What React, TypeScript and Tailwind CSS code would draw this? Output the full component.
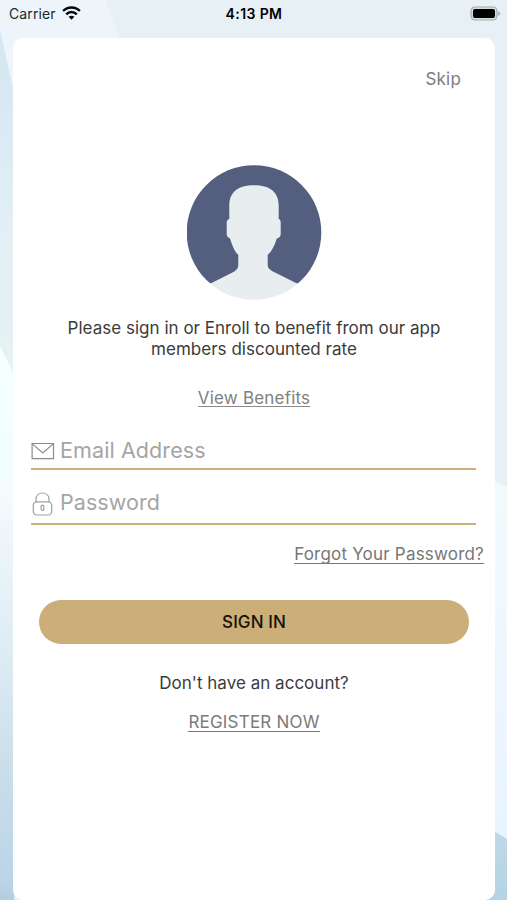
import React from "react";

function Backdrop() {
  return (
    <svg className="absolute inset-0 h-full w-full" viewBox="0 0 507 900" preserveAspectRatio="none" aria-hidden="true">
      <defs>
        <linearGradient id="leftTop" x1="0" y1="30" x2="0" y2="370" gradientUnits="userSpaceOnUse">
          <stop offset="0" stopColor="#d5e6f0" />
          <stop offset="0.3" stopColor="#dbeaf4" />
          <stop offset="0.65" stopColor="#e4f0f5" />
          <stop offset="1" stopColor="#e6f1f3" />
        </linearGradient>
        <linearGradient id="leftLow" x1="0" y1="345" x2="0" y2="900" gradientUnits="userSpaceOnUse">
          <stop offset="0" stopColor="#f5fffe" />
          <stop offset="0.25" stopColor="#f4fdfe" />
          <stop offset="0.35" stopColor="#edf5f9" />
          <stop offset="0.55" stopColor="#dfecf4" />
          <stop offset="0.75" stopColor="#cbdfea" />
          <stop offset="0.97" stopColor="#bbd4e8" />
          <stop offset="1" stopColor="#b0d0dd" />
        </linearGradient>
        <linearGradient id="rightLow" x1="0" y1="480" x2="0" y2="840" gradientUnits="userSpaceOnUse">
          <stop offset="0" stopColor="#f2fafd" />
          <stop offset="1" stopColor="#eaf4ff" />
        </linearGradient>
        <linearGradient id="rightEnd" x1="0" y1="830" x2="0" y2="900" gradientUnits="userSpaceOnUse">
          <stop offset="0" stopColor="#bfd9e7" />
          <stop offset="1" stopColor="#b5d3e3" />
        </linearGradient>
      </defs>
      <rect width="507" height="900" fill="#e7f0f5" />
      <path d="M0 0H105L120 38V100H0Z" fill="#edf5fa" />
      <path d="M0 30L14 92V372L0 345Z" fill="url(#leftTop)" />
      <path d="M0 346L14 374V900H0Z" fill="url(#leftLow)" />
      <path d="M494 481L507 487V840H494Z" fill="url(#rightLow)" />
      <path d="M480 825L494 831L507 839V900H480Z" fill="url(#rightEnd)" />
    </svg>
  );
}

function StatusBar() {
  return (
    <header className="grid h-[38px] shrink-0 grid-cols-3 items-start text-black">
      <div className="flex h-[26px] items-center pl-[9px]">
        <span className="text-[14px] tracking-[0.1px] text-[#20262a]">Carrier</span>
        <svg className="ml-[6px] h-[14px] w-[19px]" viewBox="0 0 19 14" fill="none" stroke="#05090b" strokeWidth="2.4">
          <path d="M1.1 5C5.7.4 13.3.4 17.9 5" />
          <path d="M4.2 8.3c3-3 7.6-3 10.6 0" />
          <path d="M6.6 10.8 9.5 13.8l2.9-3c-1.6-1.4-4.2-1.4-5.8 0Z" fill="#05090b" stroke="none" />
        </svg>
      </div>
      <div className="flex h-[26px] items-center justify-center pl-px text-[14px] font-semibold tracking-[0.4px]">4:13 PM</div>
      <div className="flex h-[26px] items-center justify-end pr-[6px]">
        <svg className="h-[15px] w-[31px]" viewBox="0 0 31 15">
          <rect x="1" y="1" width="26" height="13" rx="4" fill="#d4dddd" stroke="#a3acae" strokeWidth="1.2" />
          <rect x="3" y="3" width="22" height="9" rx="2" fill="#000" />
          <path d="M28.2 5.2c2.6 1 2.6 3.6 0 4.6Z" fill="#a3acae" />
        </svg>
      </div>
    </header>
  );
}

function Avatar() {
  return (
    <svg className="h-[135px] w-[135px]" viewBox="0 0 135 135">
      <defs>
        <clipPath id="avatarClip">
          <circle cx="67" cy="67.5" r="67.3" />
        </clipPath>
      </defs>
      <g clipPath="url(#avatarClip)">
        <rect width="135" height="118.5" fill="#545f80" />
        <path
          d="M42.3 54V41C42.3 27 51 20.3 67 20.3S91.7 27 91.7 41V54C93.3 54.5 93.7 56 93.7 58V69C93.7 71.5 92 73 89.8 73.5C87.8 80.5 84.5 86.5 80.7 90V100C80.7 103.5 84 105.7 88.5 107.8L110.5 118.8V135H23V118.8L45 107.8C49 105.7 51.3 103.5 51.3 100V90C47.5 86.5 45.2 80.5 43 73.5C41 72.5 39.7 71 39.7 69V58C39.7 56 40.3 54.5 42.3 54Z"
          fill="#e8edef"
        />
      </g>
    </svg>
  );
}

function MailIcon() {
  return (
    <svg className="mt-px h-[18px] w-[24px]" viewBox="0 0 24 18" fill="none" stroke="#8b8b8b" strokeWidth="1.2">
      <path d="M1.1 1.5H22.5V16.7H1.1Z" />
      <path d="M1.4 1.9 11.8 11 22.2 1.9" />
    </svg>
  );
}

function LockIcon() {
  return (
    <svg className="mt-[2px] h-[24px] w-[24px]" viewBox="0 0 24 24" fill="none" stroke="#a0a0a0" strokeWidth="1.2">
      <rect x="2.3" y="9.8" width="18.4" height="13.2" rx="3.6" />
      <path d="M5 10V7.5C5 3.6 7.8 1 11.5 1S18 3.6 18 7.5V10" />
      <ellipse cx="11.5" cy="15.8" rx="1.5" ry="2.6" />
    </svg>
  );
}

export default function App() {
  return (
    <div className="relative h-[900px] w-[507px] overflow-hidden font-['Inter','Liberation_Sans',sans-serif]">
      <Backdrop />
      <div className="relative flex h-full flex-col">
        <StatusBar />
        <main className="ml-[13px] flex h-[862px] w-[482px] flex-col rounded-[10px] bg-white">
          <div className="flex h-[82px] justify-end pt-[29px] pr-[34px]">
            <button className="h-6 text-[17px] leading-6 tracking-[0.2px] text-[#7c7c7c]">Skip</button>
          </div>
          <div className="mt-[45px] flex h-[135px] justify-center">
            <Avatar />
          </div>
          <p className="mt-[18px] text-center text-[17px] leading-[21px] tracking-[0.02px] text-[#3b3b3b]">
            Please sign in or Enroll to benefit from our app
            <br />
            members discounted rate
          </p>
          <div className="mt-[28px] flex justify-center">
            <a className="h-[19px] border-b-[1.5px] border-[#8b8b8b] text-[17px] leading-[20px] tracking-[0.2px] text-[#7f7f7f]">View Benefits</a>
          </div>
          <div className="mt-[26px] ml-[18px] flex h-[37px] w-[445px] items-center border-b-2 border-[#ceb07d]">
            <MailIcon />
            <span className="ml-[5px] pb-[2px] text-[21.5px] leading-[30px] tracking-[0.1px] text-[#a5a5a5]">Email Address</span>
          </div>
          <div className="mt-[12px] ml-[18px] flex h-[43px] w-[445px] items-center border-b-2 border-[#ceb07d]">
            <LockIcon />
            <span className="ml-[5px] pb-[2px] text-[21.5px] leading-[30px] tracking-[0.05px] text-[#a5a5a5]">Password</span>
          </div>
          <div className="mt-[20px] flex justify-end pr-[11px]">
            <a className="h-[19px] border-b border-[#777] text-[17px] leading-[19px] tracking-[0.2px] text-[#777]">Forgot Your Password?</a>
          </div>
          <button className="mt-[36px] ml-[26px] h-[44px] w-[430px] rounded-full bg-[#ccae78] pt-[2px] text-[17px] font-medium tracking-[0.1px] text-[#15120a]">
            SIGN IN
          </button>
          <p className="mt-[28px] text-center text-[17px] leading-[22px] tracking-[0.02px] text-[#3b3b3b]">Don't have an account?</p>
          <div className="mt-[18px] flex justify-center">
            <a className="h-[20px] border-b border-[#777] text-[17px] leading-[21px] tracking-[0.2px] text-[#7b7b7b]">REGISTER NOW</a>
          </div>
        </main>
      </div>
    </div>
  );
}
